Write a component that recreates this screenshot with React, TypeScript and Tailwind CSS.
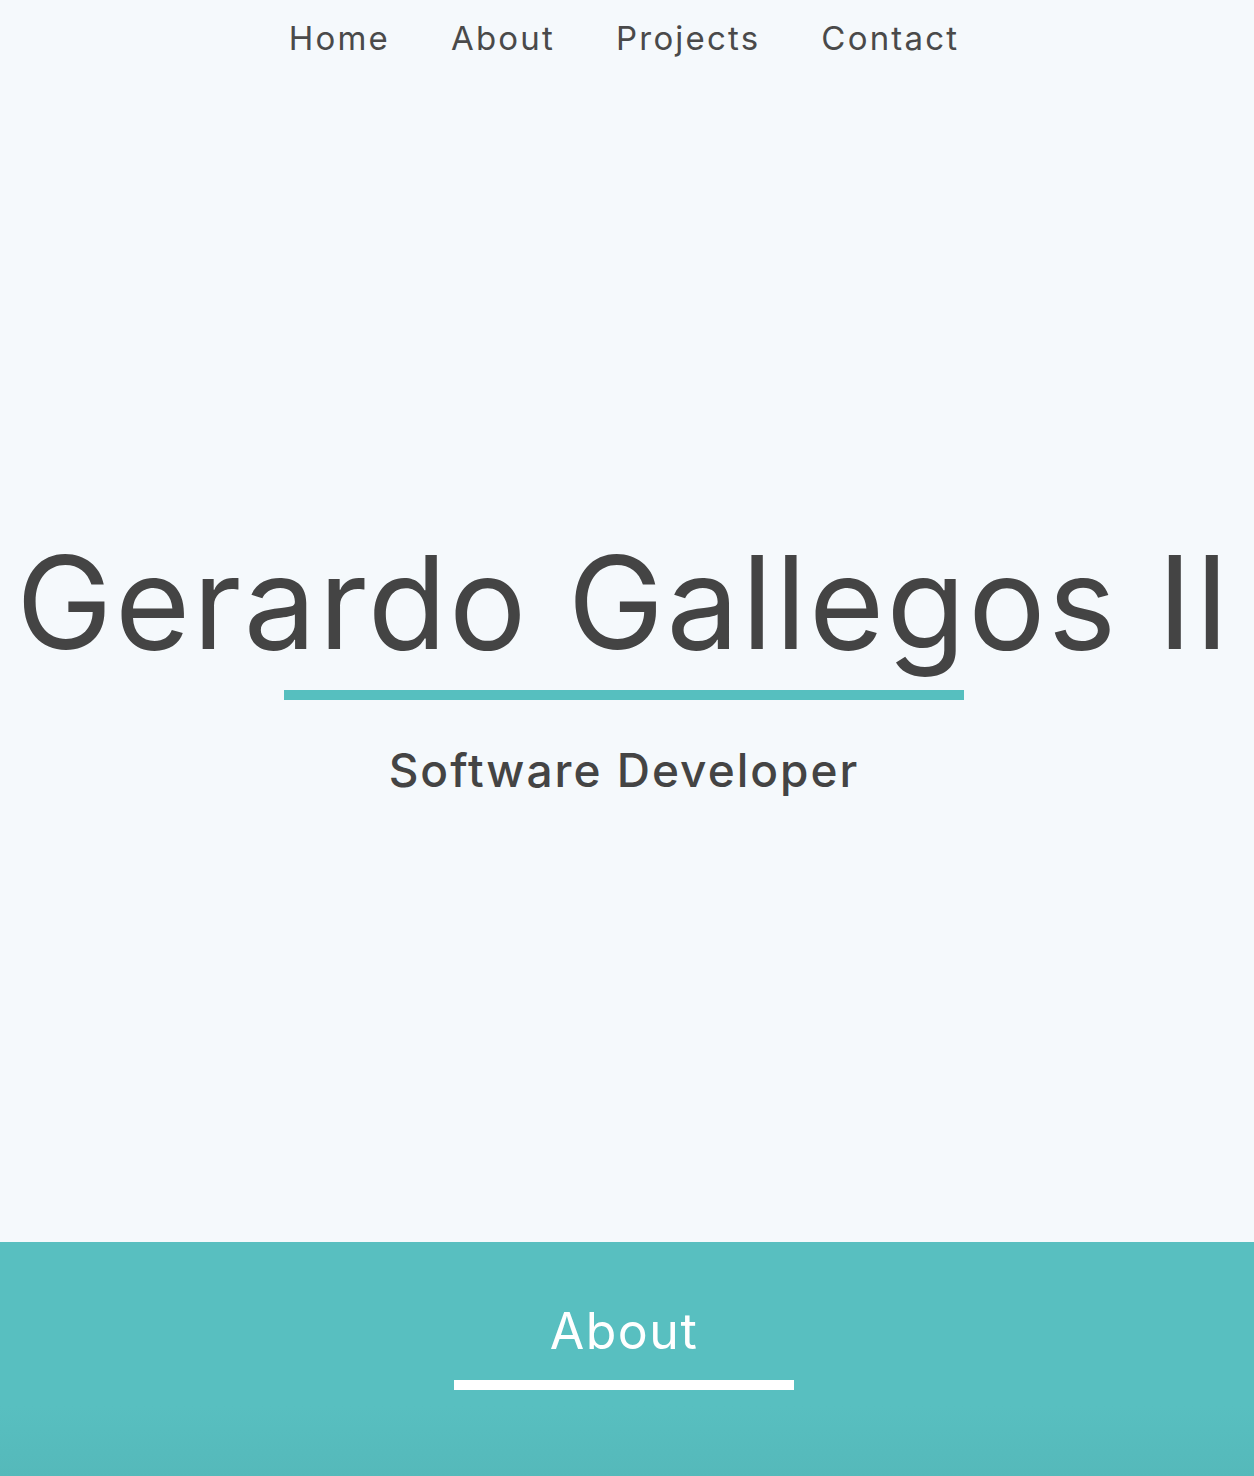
const font = { fontFamily: 'Inter, "Noto Sans", sans-serif' };

const navItems = ['Home', 'About', 'Projects', 'Contact'];

export default function App() {
  return (
    <div className="min-h-screen bg-[#f5f9fc] pr-[6px] text-[#444444]" style={font}>
      <header className="flex h-[1242px] flex-col">
        <nav className="flex h-[76px] items-center justify-center gap-[61px]">
          {navItems.map((item) => (
            <a key={item} href="#" className="text-[33px] leading-none tracking-[2.2px] text-[#4a4a4a]">
              {item}
            </a>
          ))}
        </nav>

        <div className="flex flex-1 flex-col items-center justify-center pt-[12px]">
          <h1 className="whitespace-nowrap text-[129px] font-normal leading-none tracking-[2.5px]">
            Gerardo Gallegos II
          </h1>
          <div className="mt-[23px] h-[10px] w-[680px] bg-[#56bfbf]" />
          <p className="mt-[47px] text-[46px] font-medium leading-none tracking-[2px]">Software Developer</p>
        </div>
      </header>

      <section className="-mr-[6px] flex h-[234px] flex-col items-center bg-gradient-to-b from-[#58bfc0] from-70% to-[#55b9ba] pr-[6px] pt-[64px]">
        <h2 className="text-[50px] font-normal leading-none tracking-[1.5px] text-white">About</h2>
        <div className="mt-[24px] h-[10px] w-[340px] bg-white" />
      </section>
    </div>
  );
}
